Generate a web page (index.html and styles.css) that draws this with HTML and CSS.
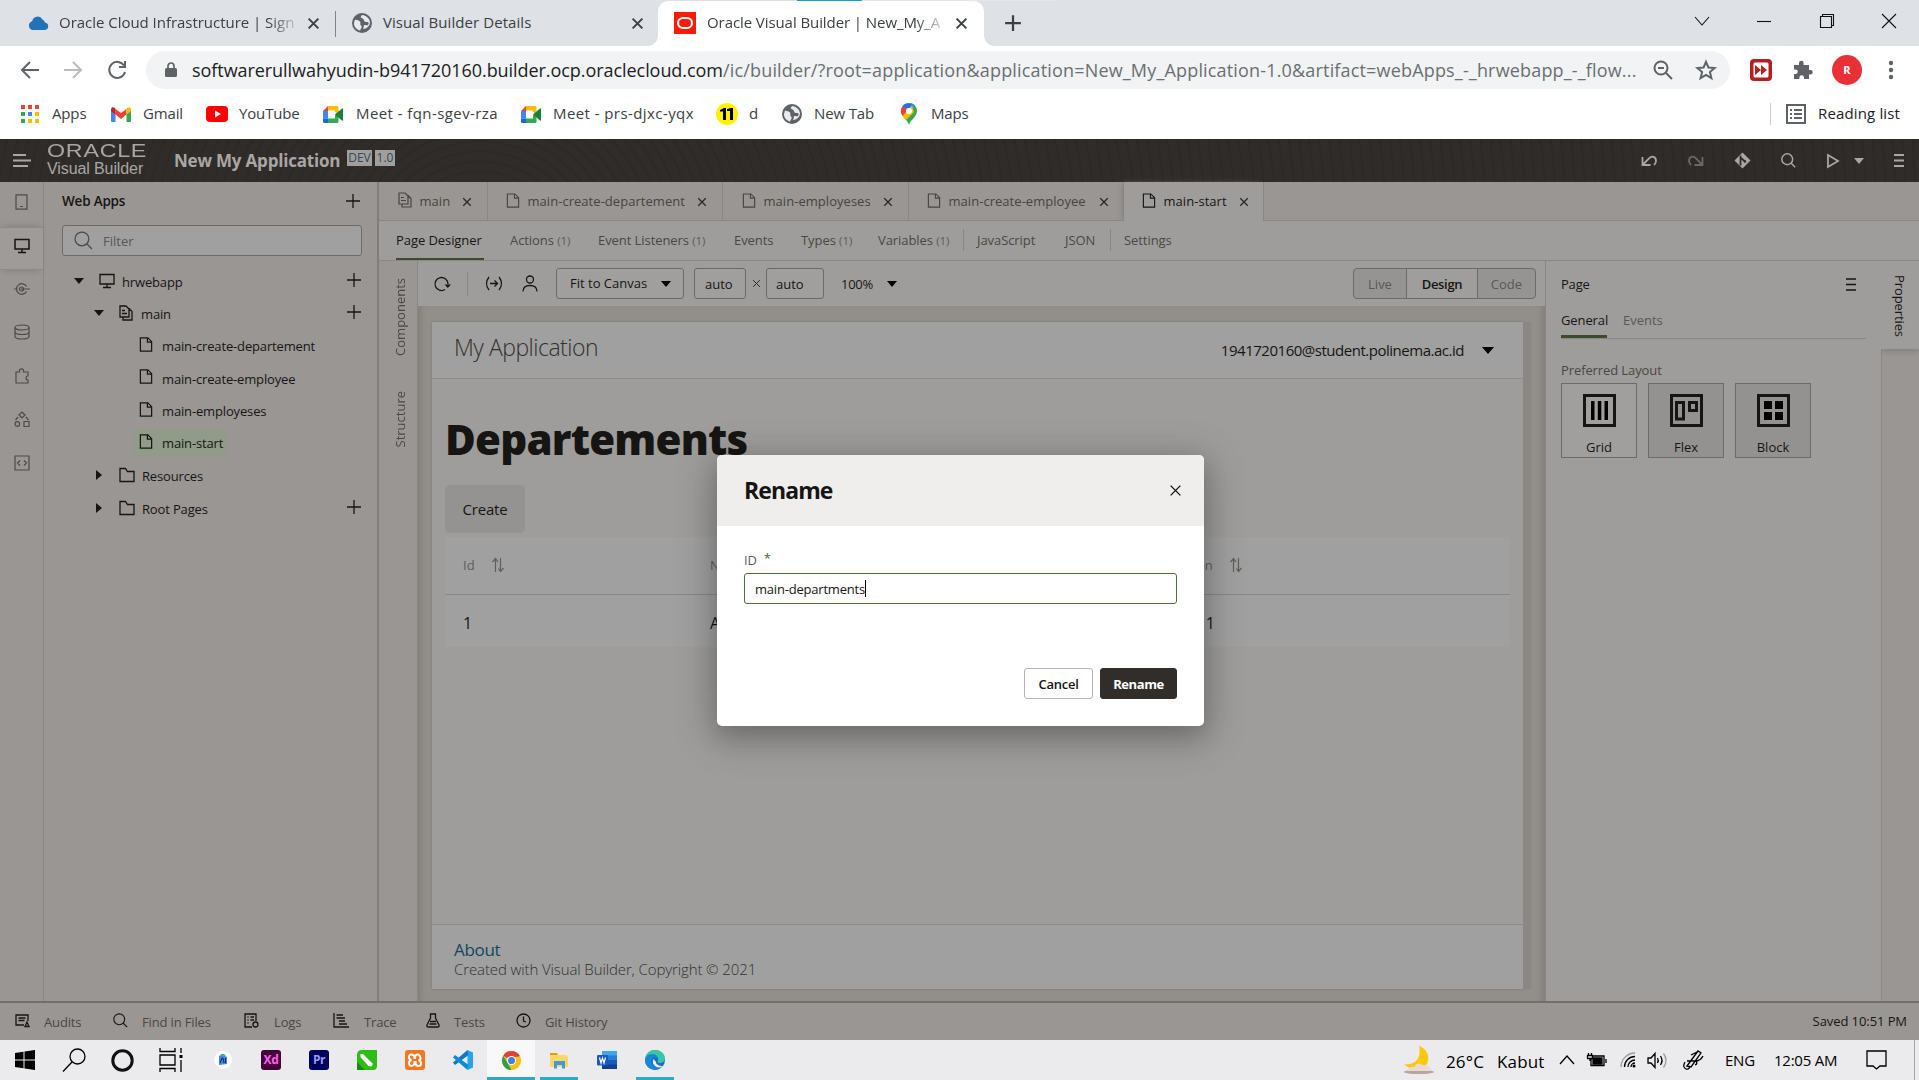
FILE: index.html
```html
<!DOCTYPE html>
<html lang="en">
<head>
<meta charset="utf-8">
<title>Oracle Visual Builder | New_My_Application</title>
<link rel="stylesheet" href="styles.css">
</head>
<body>
<svg class="defs" width="0" height="0">
  <symbol id="x" viewBox="0 0 12 12"><path d="M1.5 1.5l9 9M10.500 1.500l-9 9"/></symbol>
  <symbol id="plus" viewBox="0 0 16 16"><path d="M8 1v14M1 8h14"/></symbol>
  <symbol id="caret" viewBox="0 0 10 6"><path d="M0 0h10l-5 6z"/></symbol>
  <symbol id="caret-r" viewBox="0 0 6 10"><path d="M0 0v10l6-5z"/></symbol>
  <symbol id="page" viewBox="0 0 14 16"><path d="M1 1h8l4 4v10H1zM8.500 1v4.500H13"/></symbol>
  <symbol id="pages" viewBox="0 0 14 16"><path d="M1 1h6l3 3v8H1zM10 3.500l3 3V15H4v-3M3 5.500h3M3 8.500h5"/></symbol>
  <symbol id="folder" viewBox="0 0 16 16"><path d="M1 1.500h5.500l2 3H15v10H1z"/></symbol>
  <symbol id="monitor" viewBox="0 0 16 16"><path d="M1 1.500h14v9.500H1zM8 11v3.500M4 14.500h8"/></symbol>
  <symbol id="search" viewBox="0 0 18 18"><path d="M12.300 12.300L17 17"/><circle cx="7.500" cy="7.500" r="6.500"/></symbol>
  <symbol id="menu" viewBox="0 0 12 13"><path d="M1 1h10M1 6.500h10M1 12h10"/></symbol>
  <symbol id="sort" viewBox="0 0 12 16"><path d="M3.500 15V1.500M.5 5l3-3.500L6 5M8.500 1v13.500M6.500 11.500l2 3 3-3.500"/></symbol>
  <symbol id="globe" viewBox="0 0 20 20"><circle cx="10" cy="10" r="10" fill="#5f6368"/><path d="M3 6.500c2 1 4 .5 5 2s-.5 3 1 4 0 3-1 5C4 16.500 1.800 13 2 10zM10 2c-1 1.500-2 2-.5 3s2.500 1 2.500 2.500S14 9 15.500 9 17 11 16 12s-2-.5-3.500 0 0 2-1 2.500L11 16c3.500 0 7-3 7-6.500S14 2 10 2z" fill="#e8eaed"/></symbol>
  <symbol id="meet" viewBox="0 0 20 17"><path d="M0 5L5 0v5z" fill="#ea4335"/><path d="M5 0h9q1.500 0 1.500 1.500V8L12 6V4.500H5z" fill="#fbbc04"/><path d="M0 5h5v7.500H0z" fill="#4285f4"/><path d="M0 12.500h5V17H1.500Q0 17 0 15.500z" fill="#1967d2"/><path d="M5 12.500h7V9.500l3.500-2.500v8.500q0 1.500-1.500 1.500H5z" fill="#34a853"/><path d="M12 8.500L19 2.500q1-.5 1 .5v11q0 1-1 .5z" fill="#188038"/></symbol>
</svg>

<header class="tabstrip">
  <div class="btab first"><svg class="fav" width="21" height="14" viewBox="0 0 21 14"><path d="M5 14a4.500 4.500 0 0 1-.8-8.800A5.500 5.500 0 0 1 14.500 3.500 5 5 0 0 1 17 6.500a3.800 3.800 0 0 1 0 7.500z" fill="#2272b9"/></svg><span class="btitle fade">Oracle Cloud Infrastructure | Sign</span><svg class="bx" width="13" height="13"><use href="#x"/></svg></div>
  <div class="btab second"><svg width="20" height="20"><use href="#globe"/></svg><span class="btitle">Visual Builder Details</span><svg class="bx" width="13" height="13"><use href="#x"/></svg></div>
  <div class="btab active"><svg width="22" height="22" viewBox="0 0 22 22"><rect width="22" height="22" fill="#fb1b04"/><rect x="4" y="6" width="14" height="10" rx="5" fill="none" stroke="#fff" stroke-width="2.200"/></svg><span class="btitle fade">Oracle Visual Builder | New_My_A</span><svg class="bx" width="13" height="13"><use href="#x"/></svg></div>
  <svg class="newtab" width="18" height="18"><use href="#plus"/></svg>
  <div class="winctl">
    <svg width="16" height="16" viewBox="0 0 16 16"><path d="M1 4l7 8 7-8"/></svg>
    <svg width="16" height="16" viewBox="0 0 16 16"><path d="M1 8.500h14"/></svg>
    <svg width="16" height="16" viewBox="0 0 16 16"><path d="M1.500 3.500h11v11h-11zM3.500 3V1.500h11v11H13"/></svg>
    <svg width="16" height="16" viewBox="0 0 16 16"><path d="M1 1l14 14M15 1L1 15"/></svg>
  </div>
  <div class="accent"></div>
</header>

<nav class="toolbar">
  <svg width="20" height="20" viewBox="0 0 20 20" class="nav"><path d="M19 10H2M10 2l-8 8 8 8"/></svg>
  <svg width="20" height="20" viewBox="0 0 20 20" class="nav off"><path d="M1 10h17M10 2l8 8-8 8"/></svg>
  <svg width="20" height="20" viewBox="0 0 20 20" class="nav"><path d="M17 5.500A8 8 0 1 0 18 12M18 1v6h-6"/></svg>
  <div class="omnibox">
    <svg width="12" height="16" viewBox="0 0 12 16"><path d="M3 7V4a3 3 0 0 1 6 0v3" fill="none" stroke="#5f6368" stroke-width="1.700"/><rect y="6" width="12" height="9" rx="1.500" fill="#5f6368"/></svg>
    <span class="url"><b>softwarerullwahyudin-b941720160.builder.ocp.oraclecloud.com</b><i>/ic/builder/?root=application&amp;application=New_My_Application-1.0&amp;artifact=webApps_-_hrwebapp_-_flow...</i></span>
    <svg width="20" height="20" viewBox="0 0 20 20" class="nav"><circle cx="8" cy="8" r="6.500"/><path d="M13 13l6 6M5 8h6"/></svg>
    <svg width="20" height="20" viewBox="0 0 20 20" class="nav"><path d="M10 1.800l2.400 5.700 6.200.5-4.700 4 1.500 6.100L10 14.800l-5.400 3.300L6.100 12 1.400 8l6.200-.5z"/></svg>
  </div>
  <svg width="22" height="22" viewBox="0 0 22 22"><rect width="22" height="22" rx="4" fill="#b3201f"/><rect x="3.500" y="3.500" width="15" height="15" rx="1.500" fill="#fff"/><path d="M5 6l6 5-6 5zM11 6l6 5-6 5z" fill="#b3201f"/></svg>
  <svg width="20" height="20" viewBox="0 0 20 20"><path d="M1 5h5V3a2.300 2.300 0 0 1 4.600 0v2h5.400v5h1.500a2.300 2.300 0 0 1 0 4.600H16V19h-5v-1.500a2.300 2.300 0 0 0-4.600 0V19H1v-5h1.500a2.300 2.300 0 0 0 0-4.600H1z" fill="#5f6368"/></svg>
  <div class="avatar">R</div>
  <svg width="6" height="20" viewBox="0 0 6 20" fill="#5f6368"><circle cx="3" cy="3" r="2.200"/><circle cx="3" cy="10" r="2.200"/><circle cx="3" cy="17" r="2.200"/></svg>
</nav>

<nav class="bookmarks">
  <svg width="18" height="18" viewBox="0 0 18 18"><path d="M0 0h4v4H0zM7 0h4v4H7zM14 0h4v4h-4z" fill="#ea4335"/><path d="M0 7h4v4H0zM0 14h4v4H0z" fill="#34a853"/><path d="M7 7h4v4H7z" fill="#4285f4"/><path d="M14 7h4v4h-4zM7 14h4v4H7zM14 14h4v4h-4z" fill="#fbbc04"/></svg><span>Apps</span>
  <svg width="20" height="15" viewBox="0 0 20 15"><path d="M0 3v11q0 1 1 1h3.500V6z" fill="#4285f4"/><path d="M20 3v11q0 1-1 1h-3.500V6z" fill="#34a853"/><path d="M4.500 2l5.500 4 5.500-4v5.500L10 12 4.500 7.500z" fill="#ea4335"/><path d="M0 2.500Q.5-1 3.500.8l1 1v6L0 4z" fill="#c5221f"/><path d="M20 2.500Q19.500-1 16.500.8l-1 1v6L20 4z" fill="#fbbc04"/></svg><span>Gmail</span>
  <svg width="22" height="16" viewBox="0 0 22 16"><rect width="22" height="16" rx="4" fill="#f00"/><path d="M9 4.500v7l6-3.500z" fill="#fff"/></svg><span>YouTube</span>
  <svg width="20" height="17"><use href="#meet"/></svg><span class="call">Meet - fqn-sgev-rza</span>
  <svg width="20" height="17"><use href="#meet"/></svg><span class="call">Meet - prs-djxc-yqx</span>
  <svg width="22" height="22" viewBox="0 0 22 22"><circle cx="11" cy="11" r="11" fill="#fff200"/><path d="M4 7l4-2h2v12H7V8.500H4zM11 6l4-1h2v12h-3V8h-3z"/></svg><span>d</span>
  <svg width="20" height="20"><use href="#globe"/></svg><span>New Tab</span>
  <svg width="16" height="22" viewBox="0 0 16 22"><path d="M8 22C7 17 0 14 0 8a8 8 0 0 1 16 0c0 6-7 9-8 14z" fill="#34a853"/><path d="M1.500 3.500A8 8 0 0 1 14.500 3L8 8z" fill="#4285f4"/><path d="M2 3L7 7 1.500 13A8 8 0 0 1 2 3z" fill="#ea4335"/><path d="M1.500 13L11 2.500 13 9 5 17z" fill="#fbbc04"/><path d="M4 1l7 0-4 5-5-3z" fill="#1a73e8"/><circle cx="8" cy="8" r="3" fill="#fff"/></svg><span>Maps</span>
  <i class="bsep"></i>
  <svg width="20" height="20" viewBox="0 0 20 20"><path d="M1 1h18v18H1z" fill="none" stroke="#5f6368" stroke-width="2"/><path d="M4 6h2M4 10h2M4 14h2M8 6h8M8 10h8M8 14h8" stroke="#5f6368" stroke-width="2"/></svg><span class="reading">Reading list</span>
</nav>

<section class="app">
  <header class="apphead">
    <svg class="ham" width="18" height="13" viewBox="0 0 18 13"><path d="M0 1h13M0 6.500h18M0 12h15"/></svg>
    <div class="brand"><span class="oracle">ORACLE</span><span class="vb">Visual Builder</span></div>
    <span class="appname">New My Application</span>
    <span class="badge dev">DEV</span><span class="badge ver">1.0</span>
    <div class="headicons">
      <svg width="16" height="14" viewBox="0 0 16 14"><path d="M1.500 3v8h8M2 10.500l6-6C11 1 15 3 15 7q0 2-2 4"/></svg>
      <svg class="off" width="16" height="14" viewBox="0 0 16 14"><path d="M14.500 3v8h-8M14 10.500l-6-6C5 1 1 3 1 7q0 2 2 4"/></svg>
      <svg width="17" height="17" viewBox="0 0 17 17"><path d="M8.500.5l8 8-8 8-8-8z" fill="#aaa6a3" stroke="none"/><path d="M6.500 3.500v10M7 6l4 3.500" stroke="#302c2a"/><circle cx="11" cy="9.500" r="1.200" fill="#302c2a" stroke="none"/></svg>
      <svg width="15" height="15"><use href="#search"/></svg>
      <svg width="14" height="14" viewBox="0 0 14 14"><path d="M2 1l10 6-10 6z"/></svg>
      <svg class="solid" width="10" height="6"><use href="#caret"/></svg>
      <svg width="12" height="13"><use href="#menu"/></svg>
    </div>
  </header>

  <div class="workspace">
    <aside class="rail">
      <div><svg width="13" height="16" viewBox="0 0 13 16"><path d="M1 .8h11v14.400H1zM5 12.500h3"/></svg></div>
      <div class="on"><svg width="16" height="16"><use href="#monitor"/></svg></div>
      <div><svg width="16" height="14" viewBox="0 0 16 14"><path d="M0 7h3M7 7h9M12.500 4.500A5.300 5.300 0 1 0 12.500 9.500"/><circle cx="7.500" cy="7" r="2"/></svg></div>
      <div><svg width="16" height="16" viewBox="0 0 16 16"><ellipse cx="8" cy="3.500" rx="7" ry="2.500"/><path d="M1 3.500v9c0 3.300 14 3.300 14 0v-9M1 8c0 3.300 14 3.300 14 0"/></svg></div>
      <div><svg width="14" height="16" viewBox="0 0 14 16"><path d="M1 4h3.500a2.200 2.200 0 1 1 4 0H13v4a2 2 0 1 0 0 4v3H1z"/></svg></div>
      <div><svg width="16" height="16" viewBox="0 0 16 16"><path d="M8 1l3 3-3 3-3-3zM10 10.500h5v5h-5zM4 6L1.500 9M12 6l2.500 3"/><circle cx="3.300" cy="13" r="2.300"/></svg></div>
      <div><svg width="16" height="16" viewBox="0 0 16 16"><path d="M1 1h14v14H1zM6 5.500L3.500 8 6 10.500M10 5.500l2.500 2.500-2.500 2.500"/></svg></div>
    </aside>

    <aside class="navigator">
      <div class="navhead"><span>Web Apps</span><svg class="ln" width="16" height="16"><use href="#plus"/></svg></div>
      <div class="filter"><svg width="19" height="19"><use href="#search"/></svg><span>Filter</span></div>
      <ul class="tree">
        <li class="l1"><svg class="tri" width="10" height="6"><use href="#caret"/></svg><svg class="ln" width="16" height="16"><use href="#monitor"/></svg><span>hrwebapp</span><svg class="ln add" width="16" height="16"><use href="#plus"/></svg></li>
        <li class="l2 flow"><svg class="tri" width="10" height="6"><use href="#caret"/></svg><svg class="ln" width="14" height="16"><use href="#pages"/></svg><span>main</span><svg class="ln add" width="16" height="16"><use href="#plus"/></svg></li>
        <li class="l3"><svg class="ln" width="14" height="15"><use href="#page"/></svg><span>main-create-departement</span></li>
        <li class="l3"><svg class="ln" width="14" height="15"><use href="#page"/></svg><span>main-create-employee</span></li>
        <li class="l3"><svg class="ln" width="14" height="15"><use href="#page"/></svg><span>main-employeses</span></li>
        <li class="l3 sel"><svg class="ln" width="14" height="15"><use href="#page"/></svg><span>main-start</span></li>
        <li class="l2 h33"><svg class="tri" width="6" height="10"><use href="#caret-r"/></svg><svg class="ln" width="16" height="16"><use href="#folder"/></svg><span>Resources</span></li>
        <li class="l2 h33"><svg class="tri" width="6" height="10"><use href="#caret-r"/></svg><svg class="ln" width="16" height="16"><use href="#folder"/></svg><span>Root Pages</span><svg class="ln add" width="16" height="16"><use href="#plus"/></svg></li>
      </ul>
    </aside>

    <main class="editor">
      <div class="etabs">
        <div class="etab t1"><svg width="14" height="16"><use href="#pages"/></svg><span>main</span><svg class="ex" width="10" height="10"><use href="#x"/></svg></div>
        <div class="etab t2"><svg width="14" height="15"><use href="#page"/></svg><span>main-create-departement</span><svg class="ex" width="10" height="10"><use href="#x"/></svg></div>
        <div class="etab t3"><svg width="14" height="15"><use href="#page"/></svg><span>main-employeses</span><svg class="ex" width="10" height="10"><use href="#x"/></svg></div>
        <div class="etab t4"><svg width="14" height="15"><use href="#page"/></svg><span>main-create-employee</span><svg class="ex" width="10" height="10"><use href="#x"/></svg></div>
        <div class="etab t5"><svg width="14" height="15"><use href="#page"/></svg><span>main-start</span><svg class="ex" width="10" height="10"><use href="#x"/></svg></div>
      </div>
      <div class="subtabs">
        <span class="cur">Page Designer</span><span>Actions <small>(1)</small></span><span>Event Listeners <small>(1)</small></span><span>Events</span><span>Types <small>(1)</small></span><span>Variables <small>(1)</small></span><span class="bar">JavaScript</span><span>JSON</span><span class="bar">Settings</span>
      </div>
      <div class="ebody">
        <div class="siderail"><span class="comp">Components</span><span>Structure</span></div>
        <div class="design">
          <div class="dtools">
            <svg class="ln" width="17" height="15" viewBox="0 0 17 15"><path d="M11 13.500A6.500 6.500 0 1 1 14 8"/><path d="M10.500 8.500h6.500l-3.200 3.500z" fill="#171513" stroke="none"/></svg>
            <i class="dsep"></i>
            <svg class="ln" width="18" height="15" viewBox="0 0 18 15"><path d="M4 1Q-1 7.500 4 14M14 1q5 6.500 0 13M5 7.500h7M9.500 4.500l3 3-3 3"/></svg>
            <svg class="ln" width="16" height="17" viewBox="0 0 16 17"><circle cx="8" cy="4.500" r="3.500"/><path d="M1 16.500q0-6 7-6t7 6"/></svg>
            <div class="select">Fit to Canvas<svg width="10" height="6"><use href="#caret"/></svg></div>
            <div class="num n1">auto</div><svg class="times" width="9" height="9"><use href="#x"/></svg><div class="num n2">auto</div>
            <span class="zoom">100%</span><svg class="zc" width="10" height="6"><use href="#caret"/></svg>
            <div class="modes"><span>Live</span><span class="m">Design</span><span>Code</span></div>
          </div>
          <div class="canvas">
            <div class="pg">
              <div class="pghead"><span class="pgname">My Application</span><span class="mail">1941720160@student.polinema.ac.id</span><svg width="12" height="7" viewBox="0 0 10 6" preserveAspectRatio="none"><path d="M0 0h10l-5 6z"/></svg></div>
              <div class="pgbody">
                <h1>Departements</h1>
                <div class="create">Create</div>
                <div class="grid">
                  <div class="tr th"><span>Id<svg width="12" height="16"><use href="#sort"/></svg></span><span>Name</span><span class="loc">Location<svg width="12" height="16"><use href="#sort"/></svg></span></div>
                  <div class="tr td"><span>1</span><span>Administration</span><span class="loc">Floor 1</span></div>
                </div>
              </div>
              <div class="pgfoot"><span class="about">About</span><span class="copy">Created with Visual Builder, Copyright © 2021</span></div>
            </div>
          </div>
        </div>
        <aside class="props">
          <div class="phead"><span>Page</span><svg class="ln" width="12" height="13"><use href="#menu"/></svg></div>
          <div class="ptabs"><span class="cur">General</span><span>Events</span></div>
          <div class="plabel">Preferred Layout</div>
          <div class="layouts">
            <div class="lay pick"><svg width="33" height="33" viewBox="0 0 33 33"><path d="M1.500 1.500h30v30h-30z" fill="none" stroke="#171513" stroke-width="3"/><path d="M8 7h3.500v19H8zM14.800 7h3.500v19h-3.500zM21.500 7H25v19h-3.500z"/></svg>Grid</div>
            <div class="lay"><svg width="33" height="33" viewBox="0 0 33 33"><path d="M1.500 1.500h30v30h-30z" fill="none" stroke="#171513" stroke-width="3"/><path d="M6.500 8.500h7v16.500h-7zM19.500 8.500h7v8h-7z" fill="none" stroke="#171513" stroke-width="3"/></svg>Flex</div>
            <div class="lay"><svg width="33" height="33" viewBox="0 0 33 33"><path d="M1.500 1.500h30v30h-30z" fill="none" stroke="#171513" stroke-width="3"/><path d="M7 7h8v8H7zM18 7h8v8h-8zM7 18h8v8H7zM18 18h8v8h-8z"/></svg>Block</div>
          </div>
        </aside>
        <div class="prail"><div class="ptab"><span>Properties</span></div><div class="prest"></div></div>
      </div>
    </main>
  </div>

  <footer class="appfoot">
    <svg class="ln" width="15" height="13" viewBox="0 0 15 13"><path d="M9 11H1V1h12v6M3.500 4h7M3.500 6.500h6M10 12.500l2-4.500 2 4.500z"/></svg><span>Audits</span>
    <svg class="ln" width="15" height="15"><use href="#search"/></svg><span>Find in Files</span>
    <svg class="ln" width="15" height="15" viewBox="0 0 15 15"><path d="M8 14H1V1h11v7M3.500 4h1M6.500 4H10M3.500 7h1M6.500 7H10M3.500 10h1"/><circle cx="11.500" cy="11.500" r="2.500"/></svg><span>Logs</span>
    <svg class="ln" width="16" height="15" viewBox="0 0 16 15"><path d="M1 0v14h15M3.500 2H10M3.500 5H12M6 8h6M6 11h8"/></svg><span>Trace</span>
    <svg class="ln" width="14" height="15" viewBox="0 0 14 15"><path d="M4.500 1h5v4L13 12q.5 2-1.500 2h-9Q.5 14 1 12l3.500-7zM4 8.500h6M3.500 11h7"/></svg><span>Tests</span>
    <svg class="ln" width="15" height="15" viewBox="0 0 15 15"><circle cx="7.500" cy="7.500" r="6.500"/><path d="M7.500 3.500v4.500l2.500 1"/></svg><span>Git History</span>
    <span class="saved">Saved 10:51 PM</span>
  </footer>

  <div class="dialog">
    <div class="dhead"><span>Rename</span><svg width="13" height="13"><use href="#x"/></svg></div>
    <div class="dbody">
      <label>ID<sup>*</sup></label>
      <div class="field">main-departments<i></i></div>
      <div class="actions"><button>Cancel</button><button class="primary">Rename</button></div>
    </div>
  </div>
</section>

<footer class="taskbar">
  <div class="tb sys"><svg width="20" height="20" viewBox="0 0 20 20"><path d="M0 3l8.500-1.300v7.800H0zM9.500 1.500L20 0v9.500H9.500zM0 10.500h8.500v7.800L0 17zM9.500 10.500H20V20L9.500 18.500z"/></svg></div>
  <div class="tb sys"><svg class="ln" width="24" height="24" viewBox="0 0 24 24"><circle cx="15.500" cy="8.500" r="7.500"/><path d="M10 14L1 23.500"/></svg></div>
  <div class="tb sys"><svg width="23" height="23" viewBox="0 0 23 23"><circle cx="11.500" cy="11.500" r="9.700" fill="none" stroke="#111" stroke-width="3"/></svg></div>
  <div class="tb sys last"><svg class="ln" width="24" height="24" viewBox="0 0 24 24"><path d="M1 0v3.500h15V0M1 7h15v10H1zM1 24v-3.500h15V24M22 0v5M22 12v12"/><path d="M20.500 7h3v3h-3z" fill="#000" stroke="none"/></svg></div>
  <div class="tb"><svg width="18" height="18" viewBox="0 0 18 18"><circle cx="9" cy="9" r="9" fill="#fff"/><path d="M5 5l3-1.500 5 2.500v7l-8 1z" fill="#4285f4"/><path d="M7 3h3l2 2H6z" fill="#34b87c"/><path d="M6 12l2-5h1l1 5M11.500 7v5" fill="none" stroke="#073042"/></svg></div>
  <div class="tb"><span class="tile xd">Xd</span></div>
  <div class="tb"><span class="tile pr">Pr</span></div>
  <div class="tb"><svg width="20" height="20" viewBox="0 0 20 20"><path d="M5 0h15v16q0 4-4 4H0V5q0-5 5-5z" fill="#2ebc18"/><path d="M0 12l8 8H0z" fill="#188c12"/><path d="M3.500 4l2.500 0 10 10-1.500 2.500-3-.5-8-9z" fill="#fff"/></svg></div>
  <div class="tb"><svg width="20" height="20" viewBox="0 0 20 20"><rect width="20" height="20" rx="3" fill="#f37623"/><path d="M6 4.500q-2.500.5-2 3T6.500 10q-3 1-2.500 3.500t2.500 2.500 3-2.500V12h1v1.500q.5 2.500 3 2.500t2.500-2.500T13.500 10q2.500 0 2-2.500t-2.500-3-3 2.500v1H9.500V7Q9 4.500 6 4.500z" fill="none" stroke="#fff" stroke-width="2"/></svg></div>
  <div class="tb"><svg width="20" height="20" viewBox="0 0 20 20"><path d="M14.500 0L20 2.500v15L14.500 20z" fill="#24a3ee"/><path d="M14.500 0L0 12.500 2 15 15.500 5z" fill="#0b79c4"/><path d="M14.500 20L0 7.500 2 5l13.500 10z" fill="#0f8ad8"/></svg></div>
  <div class="tb run open"><svg width="19" height="19" viewBox="0 0 20 20"><circle cx="10" cy="10" r="10" fill="#fbc116"/><path d="M10 10L1.300 5a10 10 0 0 1 17.400 0z" fill="#dd4436"/><path d="M1.300 5L6 13l4 7A10 10 0 0 1 1.300 5z" fill="#2da150"/><path d="M9 20l4.500-8 0-6h5.200A10 10 0 0 1 9 20z" fill="#fbc116"/><circle cx="10" cy="10" r="4.800" fill="#fff"/><circle cx="10" cy="10" r="3.700" fill="#427fe6"/></svg></div>
  <div class="tb run small"><svg width="19" height="17" viewBox="0 0 19 17"><path d="M0 1h7l1 2H0z" fill="#e39a12"/><path d="M0 3h16l2 2v10H0z" fill="#ffd567"/><path d="M4 16.500V9h11v7.500h-3V13H7v3.500z" fill="#3c9ae0"/></svg></div>
  <div class="tb"><svg width="20" height="18" viewBox="0 0 20 18"><path d="M5 0h15v18H5z" fill="#2b7cd3"/><path d="M5 0h15v4.500H5z" fill="#41a5ee"/><path d="M5 9h15v9H5z" fill="#185abd"/><path d="M5 13.500h15V18H5z" fill="#103f91"/><rect y="4" width="11" height="10.500" rx="1" fill="#185abd"/><path d="M2.500 6.500l1.500 5.500 1.500-5L7 12l1.500-5.500" fill="none" stroke="#fff" stroke-width="1.200"/></svg></div>
  <div class="tb run small"><svg width="20" height="20" viewBox="0 0 20 20"><circle cx="10" cy="10" r="10" fill="#1b6fc2"/><path d="M.3 8Q2 0 10 0c6 0 10 4 10 8.500 0 3-3 4.500-5 4.500s-3-1-2-2c1-3-1-5-4-5S3 6 .3 8z" fill="#37c6a8"/><path d="M0 10q1-6 7-6 5 0 6 4-3-2-5.500 0T7 14q2 5 8 4.500A10 10 0 0 1 0 10z" fill="#1688d9"/><path d="M8.500 9q-2 4 1.500 7t8.500 0q-3 .5-5.500-1T11 12z" fill="#ebebed"/></svg></div>
  <div class="tray">
    <svg width="32" height="28" viewBox="0 0 32 28"><path d="M16 0c10 3 13 16 4 22Q9 26 1 18c10 2 18-5 15-18z" fill="#fdc70c"/><ellipse cx="16" cy="26" rx="15" ry="2" fill="#b9a39d"/><path d="M5 25q1-5 6-4 3-6 9-2 8 0 8 6z" fill="#e8dcd0"/></svg>
    <span class="wx">26°C</span><span class="wx">Kabut</span>
    <svg class="ln" width="16" height="10" viewBox="0 0 16 10"><path d="M1 9l7-8 7 8"/></svg>
    <svg class="ln" width="20" height="14" viewBox="0 0 20 14"><path d="M4 6v6.500h13V3H6M19 6v4M.5 2.500h5v3h-5zM1.500 0v2M4.500 0v2M3 5v3"/><path d="M6 5h9v6H6z" fill="#000"/></svg>
    <svg class="ln" width="16" height="16" viewBox="0 0 16 16"><path d="M1 15A14 14 0 0 1 15 1" stroke="#999"/><path d="M4.500 15A10.500 10.500 0 0 1 15 4.500M8 15a7 7 0 0 1 7-7M11 15a4 4 0 0 1 4-4"/><circle cx="14" cy="14" r="1.500" fill="#000" stroke="none"/></svg>
    <svg class="ln" width="21" height="17" viewBox="0 0 21 17"><path d="M1 6h3l4-4.500v14L4 11H1zM10.500 6q1.500 2.500 0 5M13.500 4q3 4.500 0 9"/><path d="M16.500 1.500q5 7 0 14" stroke="#999"/></svg>
    <svg class="ln" width="21" height="20" viewBox="0 0 21 20"><path d="M4 16L15 1l3 2L8 17zM14 2l-6 3M2 12q-3 5 1 7 3 1 4-3M4 11h10q4-1 6-5M12 15q3-1 1-4"/></svg>
    <span class="eng">ENG</span><span class="clock">12:05 AM</span>
    <svg class="ln" width="21" height="20" viewBox="0 0 21 20"><path d="M1 1h19v15h-6l-3.500 3L7 16H1z"/></svg>
    <i class="peek"></i>
  </div>
</footer>
</body>
</html>
```
FILE: styles.css
```css
* { box-sizing: border-box; }
body { margin: 0; width: 1919px; height: 1080px; overflow: hidden; display: flex; flex-direction: column; font-family: "Open Sans", "Noto Sans", sans-serif; font-size: 13px; color: #171513; background: #fff; white-space: nowrap; }
svg { display: block; flex: none; overflow: visible; }
.defs { position: absolute; }
.ln { fill: none; stroke: #171513; stroke-width: 1.3; }

/* browser tab strip */
.tabstrip { position: relative; flex: none; height: 46px; background: #dee1e6; display: flex; align-items: center; padding-top: 1px; }
.accent { position: absolute; top: 0; left: 797px; width: 65px; height: 1px; background: #18a0c8; box-shadow: 65px 0 #e6e6e6, 130px 0 #e6e6e6, 195px 0 #e6e6e6; }
.btab { display: flex; align-items: center; color: #3c4043; }
.btitle { font-size: 15px; letter-spacing: 0; line-height: 24px; margin-bottom: 3px; }
.fade { -webkit-mask-image: linear-gradient(90deg, #000 88%, rgba(0,0,0,.15)); mask-image: linear-gradient(90deg, #000 88%, rgba(0,0,0,.15)); }
.bx { stroke: #3c4043; stroke-width: 1.8; margin-bottom: 1px; }
.btab > svg:first-child { margin-bottom: 1px; }
.first { width: 336px; padding-left: 28px; border-right: 1px solid #808388; height: 26px; margin-right: 16px; }
.first .btitle { margin-left: 10px; width: 238px; letter-spacing: -.03px; }
.first .bx { margin-left: 10px; }
.second { width: 306px; }
.second .btitle { margin-left: 11px; width: 248px; letter-spacing: .07px; }
.active { position: relative; align-self: stretch; width: 326px; padding-left: 16px; background: #fff; border-radius: 10px 10px 0 0; }
.active::before, .active::after { content: ""; position: absolute; bottom: 0; width: 10px; height: 10px; }
.active::before { left: -10px; background: radial-gradient(circle at 0 0, transparent 9.5px, #fff 10px); }
.active::after { right: -10px; background: radial-gradient(circle at 100% 0, transparent 9.5px, #fff 10px); }
.active .btitle { margin-left: 11px; width: 237px; letter-spacing: -.08px; }
.active .bx { margin-left: 11px; }
.newtab { margin-left: 20px; margin-bottom: 1px; stroke: #3c4043; stroke-width: 2; }
.winctl { display: flex; gap: 46.500px; margin-left: auto; padding-right: 22px; padding-bottom: 6px; }
.winctl svg { fill: none; stroke: #111; stroke-width: 1.1; }

/* browser toolbar */
.toolbar { flex: none; height: 48px; display: grid; grid-template-columns: 43px 44px 39px 1604px 43px 39px 56px 6px; padding: 0 0 0 20px; align-items: center; }
.nav { fill: none; stroke: #5f6368; stroke-width: 2; }
.nav.off { stroke: #babcbe; }
.omnibox { height: 38px; border-radius: 19px; width: 1584px; background: #f1f3f4; padding-left: 19px; display: grid; grid-template-columns: 27px 1461px 43px 20px; align-items: center; }
.url { font-size: 18px; letter-spacing: -.06px; line-height: 26px; color: #202124; }
.url b { font-weight: 400; }
.url i { font-style: normal; color: #6b6f73; letter-spacing: .17px; }
.avatar { width: 30px; height: 30px; border-radius: 50%; background: #e73137; color: #fff; font-weight: 700; font-size: 11px; line-height: 29px; text-align: center; }

.bookmarks { flex: none; height: 45px; padding: 0 0 5px 21px; display: grid; align-items: center; grid-template-columns: 31px 59px 32px 63px 33px 84px 33px 165px 32px 163px 33px 33px 32px 87px 30px 839px 16px 32px auto; font-size: 15px; letter-spacing: -.15px; color: #3c4043; }
.bookmarks span { margin-bottom: 2px; }
.call { letter-spacing: .42px; }
.bsep { width: 1px; height: 22px; background: #c8cacd; }
.reading { color: #202124; letter-spacing: .15px; }

/* application */
.app { position: relative; flex: none; height: 901px; display: flex; flex-direction: column; background: #9a9693; }
.apphead { flex: none; height: 43px; display: flex; align-items: center; background: #302c2a repeating-radial-gradient(circle at 480px 120px, transparent 0 6px, rgba(0,0,0,.08) 7px 8px, transparent 9px 10px); color: #aaa6a3; }
.ham { margin: 0 16px 0 13px; fill: none; stroke: #aaa6a3; stroke-width: 2; }
.brand { width: 127px; display: flex; flex-direction: column; font-family: "Liberation Sans", sans-serif; padding-bottom: 1px; }
.oracle { font-size: 18px; line-height: 18px; letter-spacing: .6px; transform: scaleX(1.29); transform-origin: 0 0; width: 80px; }
.vb { font-size: 16px; line-height: 18px; letter-spacing: -.1px; }
.appname { width: 173px; font-size: 17px; font-weight: 700; letter-spacing: -.2px; }
.badge { height: 16px; margin-right: 3px; margin-bottom: 5px; background: #a19f9d; color: #2e4a5c; font-size: 12px; line-height: 16px; text-align: center; }
.dev { width: 25px; }
.ver { width: 20px; }
.headicons { margin-left: auto; display: grid; grid-template-columns: 47px 46px 47px 45px 28px 39px 12px; align-items: center; padding-right: 14px; }
.headicons svg { fill: none; stroke: #aaa6a3; stroke-width: 1.8; }
.headicons .off { stroke: #6b6765; }
.headicons .solid { fill: #aaa6a3; stroke: none; }
.workspace { flex: 1; min-height: 0; display: flex; }
.rail { width: 44px; border-right: 1px solid #8a8683; flex: none; }
.rail div { height: 43.500px; display: flex; align-items: center; justify-content: center; }
.rail div:first-child { height: 43px; padding-bottom: 3px; }
.rail svg { fill: none; stroke: #4d4a47; stroke-width: 1.2; }
.rail .on { height: 43px; margin-top: 2px; background: #9e9b98; border-top: 1px solid #8d8986; border-bottom: 1px solid #8d8986; box-shadow: 0 -4px 6px -3px #858280, 0 4px 6px -3px #858280; padding-bottom: 6px; margin-bottom: -3px; }
.rail .on svg { stroke: #171513; stroke-width: 1.5; }

.navigator { width: 335px; flex: none; border-right: 2px solid #807d7b; padding-left: 18px; }
.navhead { display: flex; align-items: center; justify-content: space-between; height: 38px; padding-right: 16px; font-size: 13.500px; font-weight: 600; letter-spacing: -.2px; }
.filter { margin-top: 5px; width: 300px; height: 31px; border: 1px solid #6d6a68; border-radius: 3px; background: #a0a0a0; display: flex; align-items: center; gap: 10px; padding-left: 11px; color: #5a5754; }
.filter svg { fill: none; stroke: #4d4a47; stroke-width: 1.2; margin-bottom: 1px; }
.filter span { padding-top: 0; }
.tree { list-style: none; margin: 9px 0 0; padding: 0; letter-spacing: -.15px; }
.tree li { display: flex; align-items: center; height: 32.500px; }
.tree li.flow { height: 31.500px; }
.tree li.h33 { height: 33px; }
.tree span { padding-top: 2px; }
.tree .tri { width: 10px; fill: #171513; }
.l1 { padding-left: 12px; }
.l1 .ln { margin: 0 7px 0 15px; }
.l2 { padding-left: 32px; }
.l2 .ln { margin: 0 8px 0 15px; }
.h33 .ln { margin-right: 7px; }
.l3 { padding-left: 77px; }
.l3 .ln { margin: 0 9px 2px 0; }
.tree .add { margin: 0 15px 2px auto; }
.tree .sel { height: 27px; width: 93px; margin: 2px 0 3px 72px; padding-left: 5px; background: #909b89; }

.editor { flex: 1; min-width: 0; display: flex; flex-direction: column; }
.etabs { flex: none; height: 39px; display: flex; border-bottom: 1px solid #8a8683; }
.etab { display: flex; align-items: center; border-right: 1px solid #8a8683; padding: 0 0 1px 18.500px; color: #474441; font-size: 13px; letter-spacing: .04px; }
.etab svg { fill: none; stroke: #474441; stroke-width: 1.2; margin-bottom: 1px; }
.etab span { margin-left: 8px; }
.etab .ex { stroke: #2b2826; stroke-width: 1.6; margin: 2px 15px 0 auto; }
.t1 { width: 109px; } .t2 { width: 235px; } .t3 { width: 186px; } .t4 { width: 215px; }
.t5 { width: 140px; height: 39px; background: #9f9d9b; color: #171513; box-shadow: -4px 0 5px -2px #858280; }
.t5 svg { stroke: #171513; }
.t5 .ex, .t4 .ex { margin-right: 14px; }
.etab.t2, .etab.t4, .etab.t5 { padding-left: 17.500px; }
.subtabs { flex: none; height: 40px; border-bottom: 1px solid #8a8683; background: #9f9d9b; display: grid; grid-template-rows: 39px; grid-template-columns: 113px 88px 136px 67px 77px 99px 88px 59px auto; padding-left: 18px; line-height: 39px; color: #4a4745; font-size: 13px; letter-spacing: -.07px; }
.subtabs small { font-size: 11.500px; color: #5d5a57; }
.subtabs .cur { width: 88px; margin-left: -1px; border-bottom: 2px solid #3b4b2e; color: #171513; font-weight: 500; }
.bar { position: relative; }
.bar::before { content: ""; position: absolute; left: -14px; top: 8px; height: 22px; width: 1px; background: #8a8683; }
.ebody { flex: 1; min-height: 0; display: flex; }
.siderail { width: 39px; flex: none; border-right: 1px solid #8a8683; padding: 17px 0 0 10px; color: #4a4745; font-size: 13px; display: flex; flex-direction: column; gap: 35px; }
.siderail span { writing-mode: vertical-rl; transform: rotate(180deg); line-height: 22px; width: 22px; }
.design { width: 1127px; flex: none; display: flex; flex-direction: column; }
.dtools { flex: none; height: 45px; background: #9f9d9b; padding-left: 16px; display: flex; align-items: center; color: #171513; }
.dsep { width: 1px; height: 24px; background: #8a8683; margin: 0 17px 0 16px; }
.dtools .ln + .ln { margin-left: 19px; }
.select, .num { height: 31px; line-height: 31px; border: 1px solid #6d6a68; border-radius: 3px; background: #a09f9d; }
.select { margin-left: 18px; width: 128px; padding-left: 13px; display: flex; align-items: center; gap: 14px; font-weight: 500; letter-spacing: 0; }
.n1 { width: 52px; margin-left: 10px; padding-left: 10px; }
.times { margin: 0 5.500px; stroke: #2b2826; stroke-width: 1.3; }
.n2 { width: 58px; padding-left: 9px; }
.zoom { width: 46px; margin-left: 17px; letter-spacing: -.3px; font-weight: 500; }
.modes { margin-left: 456px; height: 31px; width: 183px; display: grid; grid-template-columns: 52px 72px 57px; border: 1px solid #6d6a68; border-radius: 4px; background: #969492; text-align: center; line-height: 30px; color: #5a5754; overflow: hidden; }
.m { background: #9f9e9c; color: #171513; font-weight: 600; letter-spacing: -.3px; border: 1px solid #6d6a68; border-width: 0 1px; }
.canvas { flex: 1; background: #928e8a; padding: 16px 0 0 14px; box-shadow: inset 7px 0 5px -4px #83807c, inset -7px 0 5px -4px #83807c; }
.pg { width: 1091px; height: 667px; display: flex; flex-direction: column; background: #9e9d9b; box-shadow: 8px 0 1px #898884, 0 0 2px #777; }
.pghead { height: 57px; flex: none; background: #a0a0a0; border-bottom: 1px solid #8e8c8a; display: flex; align-items: center; padding: 0 29px 0 22px; }
.pgname { font-size: 23px; font-weight: 300; letter-spacing: -.5px; color: #33302d; padding-bottom: 7px; margin-right: auto; }
.mail { font-size: 15px; font-weight: 500; letter-spacing: -.48px; margin-right: 18px; }
.pgbody { flex: 1; padding: 0 13px; }
h1 { margin: 32px 0 0 0; font-size: 42px; font-weight: 800; line-height: 55px; letter-spacing: -.8px; }
.create { margin-top: 19px; width: 80px; height: 48px; border-radius: 5px; background: #949391; font-size: 15px; line-height: 49px; text-align: center; letter-spacing: -.2px; font-weight: 500; }
.grid { margin-top: 4px; background: #a0a0a0; }
.tr { display: grid; grid-template-columns: 247px 439px auto; padding-left: 18px; align-items: center; }
.th { height: 58px; border-bottom: 1px solid #8a8886; color: #605d5a; font-size: 13px; padding-bottom: 1px; }
.th span { display: flex; align-items: center; gap: 17px; }
.th svg { fill: none; stroke: #605d5a; stroke-width: 1.2; }
.td { height: 52px; font-size: 16px; padding-top: 3px; }
.th .loc { padding-left: 12px; }
.td .loc { padding-left: 15px; letter-spacing: -.1px; }
.pgfoot { height: 65px; flex: none; background: #a0a0a0; border-top: 1px solid #8e8c8a; padding: 13px 22px; display: flex; flex-direction: column; }
.about { color: #11475c; font-size: 17px; line-height: 23px; letter-spacing: -.3px; }
.copy { color: #33302d; font-size: 15px; font-weight: 300; line-height: 17px; letter-spacing: -.11px; }

.props { width: 336px; flex: none; border-left: 1px solid #8a8683; background: #9f9d9b; padding: 0 15px; }
.phead { height: 46px; padding-right: 9px; display: flex; align-items: center; justify-content: space-between; font-weight: 500; letter-spacing: -.2px; }
.ptabs { display: flex; margin-top: -4px; border-bottom: 1px solid #8a8683; gap: 16px; height: 36px; align-items: flex-end; color: #5a5754; }
.ptabs span { height: 36px; line-height: 36px; }
.ptabs .cur { width: 46px; border-bottom: 3px solid #3b4b2e; color: #171513; letter-spacing: -.1px; }
.plabel { margin-top: 21px; line-height: 20px; color: #4a4745; letter-spacing: -.1px; }
.layouts { display: flex; gap: 11px; margin-top: 3px; }
.lay { width: 76px; height: 75px; border: 1px solid #6d6a68; background: #949290; display: flex; flex-direction: column; align-items: center; padding-top: 10px; line-height: 18px; gap: 11px; }
.pick { background: #a09f9d; }
.prail { flex: 1; display: flex; flex-direction: column; }
.ptab { height: 88px; background: #9f9d9b; box-shadow: 0 2px 6px #807d7b; display: flex; padding: 14px 0 0 8px; clip-path: inset(0 0 -8px 0); }
.ptab span { writing-mode: vertical-rl; line-height: 22px; letter-spacing: -.1px; }
.prest { flex: 1; border-left: 1px solid #8a8683; }

.appfoot { flex: none; height: 39px; border-top: 2px solid #716e6c; padding: 0 12px 0 15px; display: grid; grid-template-columns: 29px 69px 29px 102px 30px 59px 31px 62px 28px 62px 29px auto auto; align-items: center; color: #4a4745; letter-spacing: -.15px; }
.appfoot .ln { margin-bottom: 2px; }
.saved { text-align: right; color: #171513; letter-spacing: -.08px; margin-bottom: 1px; }

/* dialog floating over the dimmed workspace */
.dialog { position: absolute; left: 717px; top: 316px; width: 487px; height: 271px; border-radius: 5px; background: #fff; box-shadow: 0 8px 40px 6px rgba(0,0,0,.2), 0 10px 24px rgba(0,0,0,.16); overflow: visible; }
.dhead { height: 71px; background: #efeeed; border-radius: 5px 5px 0 0; padding: 0 22px 1px 27px; display: flex; align-items: center; justify-content: space-between; font-size: 23px; font-weight: 700; letter-spacing: -.9px; }
.dhead svg { stroke: #171513; stroke-width: 1.3; }
.dbody { padding: 23px 27px; }
label { display: block; height: 24px; line-height: 22px; color: #605d5a; letter-spacing: -.2px; }
sup { margin-left: 7px; font-size: 13px; line-height: 0; vertical-align: 2px; color: #4a5f3a; }
.field { height: 31px; border: 1px solid #4f6e3c; border-radius: 3px; padding-left: 10px; display: flex; align-items: center; letter-spacing: -.2px; }
.field i { width: 1px; height: 17px; background: #000; }
.actions { display: flex; justify-content: flex-end; gap: 7px; margin-top: 64px; }
button { width: 69px; height: 31px; padding: 0; border: 1px solid #b5b3b1; border-radius: 3px; background: #fff; color: #171513; font: 600 13px "Open Sans", sans-serif; letter-spacing: -.25px; }
.primary { width: 77px; background: #312d2a; border-color: #312d2a; color: #fff; font-weight: 700; letter-spacing: -.4px; }

/* desktop taskbar */
.taskbar { flex: none; height: 40px; background: #ebebed; display: flex; color: #000; }
.tb { width: 48px; display: flex; align-items: center; justify-content: center; }
.sys { width: 49px; }
.last { margin-right: 3px; padding-right: 2px; }
.tb .ln, .tray .ln { stroke: #000; }
.tile { width: 20px; height: 20px; border-radius: 3px; font-size: 12px; font-weight: 700; line-height: 19px; text-align: center; letter-spacing: -.4px; }
.xd { background: #470137; color: #ff61f6; }
.pr { background: #00005b; color: #9999ff; }
.run { border-bottom: 3px solid #2ba8ca; padding-top: 3px; }
.open { background: #f8f8f8; }
.small { width: 38px; margin: 0 5px; }
.tray { margin-left: auto; display: grid; grid-template-columns: 43px 51px 62px 28px 33px 27px 36px 42px 49px 92px 48px 5px; align-items: center; }
.wx { font-size: 17px; letter-spacing: .15px; padding-top: 3px; }
.eng, .clock { font-size: 15px; letter-spacing: -.25px; }
.peek { height: 40px; border-left: 1px solid #a8a8aa; }
```
